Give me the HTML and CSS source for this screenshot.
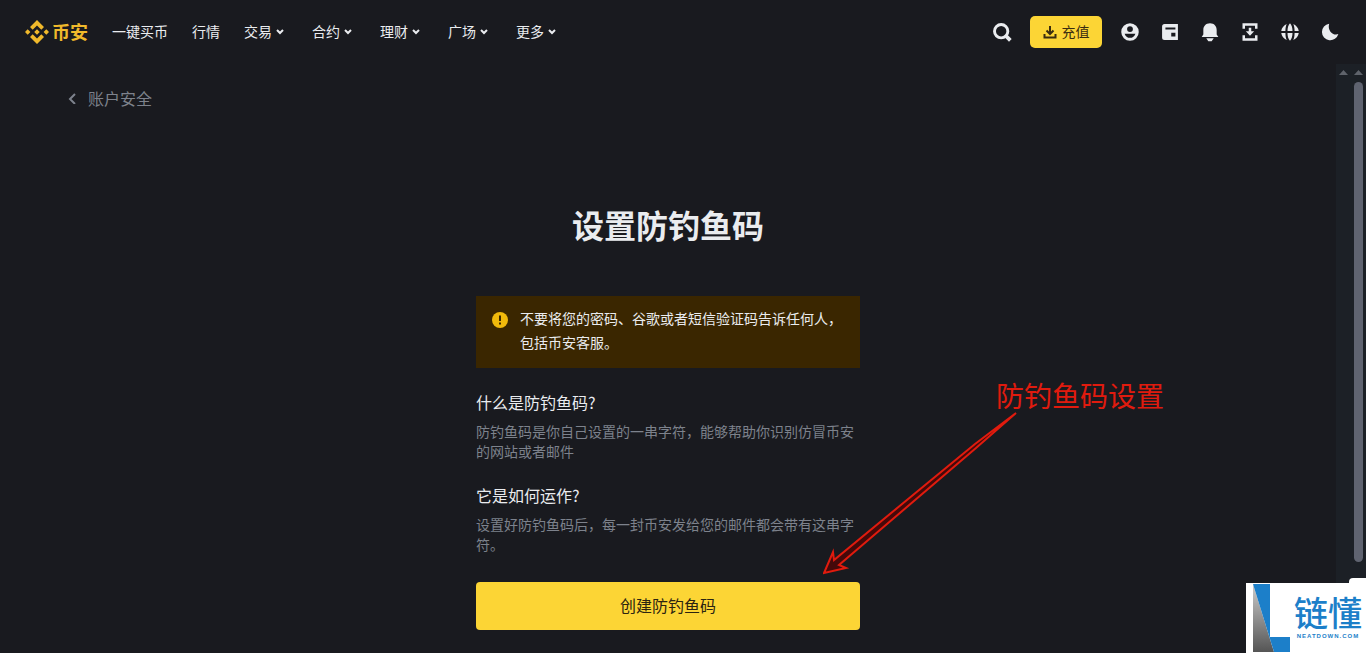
FILE: index.html
```html
<!DOCTYPE html>
<html lang="zh-CN">
<head>
  <meta charset="UTF-8" />
  <meta name="viewport" content="width=device-width, initial-scale=1.0" />
  <title>设置防钓鱼码</title>
  <link rel="stylesheet" href="styles.css">
</head>
<body>
  <header class="header">
    <a class="logo" href="#">
      <svg width="24" height="24" viewBox="0 0 24 24" fill="currentColor">
        <path d="M12 0l7 7-2.700 2.700L12 5.400 7.700 9.700 5 7z" />
        <path d="M12 24l7-7-2.700-2.700L12 18.600l-4.300-4.300L5 17z" />
        <path d="M2.700 9.300L5.400 12l-2.700 2.700L0 12zM21.300 9.300L24 12l-2.700 2.700-2.700-2.700zM12 9.200l2.800 2.800-2.800 2.800L9.200 12z" />
      </svg>
      <span>币安</span>
    </a>
    <nav class="nav">
      <a href="#">一键买币</a>
      <a href="#">行情</a>
      <a href="#">交易<svg class="arrow" viewBox="0 0 8 6"><path d="M1 1l3 3 3-3" /></svg></a>
      <a href="#">合约<svg class="arrow" viewBox="0 0 8 6"><path d="M1 1l3 3 3-3" /></svg></a>
      <a href="#">理财<svg class="arrow" viewBox="0 0 8 6"><path d="M1 1l3 3 3-3" /></svg></a>
      <a href="#">广场<svg class="arrow" viewBox="0 0 8 6"><path d="M1 1l3 3 3-3" /></svg></a>
      <a href="#">更多<svg class="arrow" viewBox="0 0 8 6"><path d="M1 1l3 3 3-3" /></svg></a>
    </nav>
    <div class="tools">
      <button class="icon" aria-label="搜索">
        <svg viewBox="0 0 24 24" fill="none" stroke="currentColor" stroke-width="3.500"><circle cx="11" cy="11" r="8" /><path d="M17 17l5 5" stroke-width="4.500" /></svg>
      </button>
      <button class="deposit">
        <svg width="14" height="14" viewBox="0 0 14 14" fill="none" stroke="currentColor" stroke-width="2"><path d="M7 1v7M3.500 5.500L7 9l3.500-3.500M1.500 9v3.500h11V9" /></svg>
        <span>充值</span>
      </button>
      <button class="icon" aria-label="用户">
        <svg viewBox="0 0 24 24" fill="currentColor"><path fill-rule="evenodd" d="M12 1.500a10.500 10.500 0 100 21 10.500 10.500 0 000-21zM12 5a3.500 3.500 0 110 7 3.500 3.500 0 010-7zM5.500 14h13c-1 3.300-3.400 5-6.500 5s-5.500-1.700-6.500-5z" /></svg>
      </button>
      <button class="icon" aria-label="钱包">
        <svg viewBox="0 0 24 24" fill="currentColor"><path fill-rule="evenodd" d="M5.500 2.500h16v19h-16a3 3 0 01-3-3v-13a3 3 0 013-3zM6.500 6.500v2.500h12V6.500zM13.500 13v4.500h5V13z" /></svg>
      </button>
      <button class="icon" aria-label="通知">
        <svg viewBox="0 0 24 24" fill="currentColor"><path d="M12 1.500c5 0 8 3.500 8 8V15l2 3H2l2-3V9.500c0-4.500 3-8 8-8zM7.500 19.500h9L14 23h-4z" /></svg>
      </button>
      <button class="icon" aria-label="下载">
        <svg viewBox="0 0 24 24" fill="currentColor"><path d="M3 1.500h18V8h-3V4.500H6V8H3zM3 22.500h18V16h-3v3.500H6V16H3zM10.500 7h3v4h3.500L12 16.500 7 11h3.500z" /></svg>
      </button>
      <button class="icon" aria-label="语言">
        <svg viewBox="0 0 24 24" fill="currentColor"><path d="M8 2.300C4.500 4 2 7 1.500 10.800h5C6.500 7.500 7 4.500 8 2.300zM1.500 13.200h5c0 3.300.5 6.300 1.500 8.500-3.500-1.700-6-4.700-6.500-8.500zM16 2.300c3.500 1.700 6 4.700 6.500 8.500h-5c0-3.300-.5-6.300-1.500-8.500zM22.500 13.200h-5c0 3.300-.5 6.300-1.500 8.500 3.500-1.700 6-4.700 6.500-8.500zM12 1.500c-2 2-3 5.500-3 9.300h6c0-3.800-1-7.300-3-9.300zM12 22.500c-2-2-3-5.500-3-9.300h6c0 3.800-1 7.300-3 9.300z" /></svg>
      </button>
      <button class="icon" aria-label="夜间模式">
        <svg viewBox="0 0 24 24" fill="currentColor"><path d="M11 2A10 10 0 1022 14.500C16 17 8.500 10.500 11 2z" /></svg>
      </button>
    </div>
  </header>

  <div class="page">
    <main class="content">
      <a class="back" href="#">
        <svg width="8" height="12" viewBox="0 0 8 12" fill="none" stroke="currentColor" stroke-width="2"><path d="M7 2L2 7l5 5" /></svg>
        账户安全
      </a>
      <section class="panel">
        <h1>设置防钓鱼码</h1>
        <div class="warning">
          <svg width="16" height="16" viewBox="0 0 16 16"><circle cx="8" cy="8" r="8" fill="#f0b90b" /><path d="M7 3.500h2v5.500H7zM7 10.500h2v2H7z" fill="#3a2600" /></svg>
          <p>不要将您的密码、谷歌或者短信验证码告诉任何人，包括币安客服。</p>
        </div>
        <h2>什么是防钓鱼码?</h2>
        <p class="desc">防钓鱼码是你自己设置的一串字符，能够帮助你识别仿冒币安的网站或者邮件</p>
        <h2>它是如何运作?</h2>
        <p class="desc">设置好防钓鱼码后，每一封币安发给您的邮件都会带有这串字符。</p>
        <button class="create">创建防钓鱼码</button>

        <div class="note">
          <span>防钓鱼码设置</span>
          <svg width="196" height="166" viewBox="0 0 196 166"><path d="M193 2L152 33 11 149l-1-8L1 162l22-5-7-3L153 37z" /></svg>
        </div>
      </section>
    </main>
    <div class="track"><i class="up"></i></div>
    <div class="track"><i class="up"></i><i class="thumb"></i></div>
  </div>

  <div class="corner"></div>
  <div class="watermark">
    <svg width="38" height="68" viewBox="0 0 38 68">
      <defs><linearGradient id="fade" x1="0" y1="0" x2="0" y2="1"><stop offset="0" stop-color="#ccc" /><stop offset="1" stop-color="#555" /></linearGradient></defs>
      <path d="M0 0l21 68H0z" fill="url(#fade)" />
      <path d="M0 0h17v53h20v15H21z" fill="#1c7fc9" />
    </svg>
    <div class="brand"><b>链懂</b><small>NEATDOWN.COM</small></div>
  </div>
</body>
</html>
```

FILE: styles.css
```css
* { box-sizing: border-box; }
body { margin: 0; min-height: 100vh; display: flex; flex-direction: column; background: #191a1f; color: #eaecef; font-family: "Noto Sans CJK SC", sans-serif; font-size: 14px; }
h1, h2, p { margin: 0; }
a { color: inherit; text-decoration: none; }
button { border: none; padding: 0; background: none; color: inherit; font: inherit; cursor: pointer; }

.header { display: flex; align-items: center; height: 64px; padding: 0 26px 0 25px; }
.logo { display: flex; align-items: center; gap: 3px; margin-right: 24px; color: #f0b92b; font-size: 18px; font-weight: 700; line-height: 24px; }
.logo span { padding-bottom: 2px; }
.nav { display: flex; gap: 24px; padding-bottom: 3px; line-height: 20px; }
.nav a { display: flex; align-items: center; }
.arrow { width: 8px; height: 6px; margin: 2px 4px 0; fill: none; stroke: currentColor; stroke-width: 2; }
.tools { display: flex; align-items: center; gap: 20px; margin-left: auto; }
.icon { width: 20px; height: 20px; }
.icon svg { display: block; width: 20px; height: 20px; }
.deposit { display: flex; align-items: center; justify-content: center; gap: 5px; width: 72px; height: 32px; margin: 0 -2px; border-radius: 5px; background: #fcd535; color: #3a2d10; }
.deposit span { padding-bottom: 3px; }

.page { flex: 1; display: flex; }
.content { flex: 1; }
.back { display: flex; align-items: center; gap: 12px; padding: 22px 0 0 68px; color: #7d828c; font-size: 16px; line-height: 24px; }
.panel { position: relative; width: 384px; margin: 88px auto 22px; }
.panel h1 { margin-bottom: 46px; font-size: 32px; line-height: 52px; text-align: center; }
.panel h2 { margin-top: 22px; font-size: 16px; font-weight: 400; line-height: 24px; }
.desc { margin-top: 7px; color: #7d828c; line-height: 20px; }
.warning { display: flex; gap: 12px; padding: 10px 16px 14px; background: #3a2600; line-height: 24px; }
.warning svg { flex: none; margin-top: 6px; }
.create { width: 100%; height: 48px; margin-top: 28px; padding-bottom: 3px; border-radius: 4px; background: #fcd535; color: #2b2411; font-size: 16px; }

/* callout over the form */
.note { position: absolute; left: 347px; top: 181px; width: 341px; color: #e01b0e; font-size: 28px; line-height: 32px; text-align: right; }
.note svg { display: block; fill: #45090a; stroke: #e01b0e; stroke-width: 2; }

.track { width: 15px; padding-top: 6px; background: #1c2026; }
.up { display: block; margin: 0 auto; width: 9px; height: 5px; background: #5f636b; clip-path: polygon(50% 0, 100% 100%, 0 100%); }
.thumb { display: block; width: 9px; height: 480px; margin: 7px auto 0; border-radius: 5px; background: #5f6370; }

.corner { position: fixed; right: 0; bottom: 70px; width: 17px; height: 5px; border-radius: 4px 0 0 0; background: #fff; }
.watermark { position: fixed; right: 0; bottom: 0; display: flex; align-items: center; gap: 3px; width: 120px; height: 70px; padding-left: 7px; background: #fff; color: #1c7fc9; }
.brand { display: flex; flex-direction: column; align-items: center; }
.brand b { font-size: 34px; font-weight: 500; line-height: 36px; }
.brand small { font: 700 6px/12px "Liberation Sans", sans-serif; letter-spacing: 1px; }
```
